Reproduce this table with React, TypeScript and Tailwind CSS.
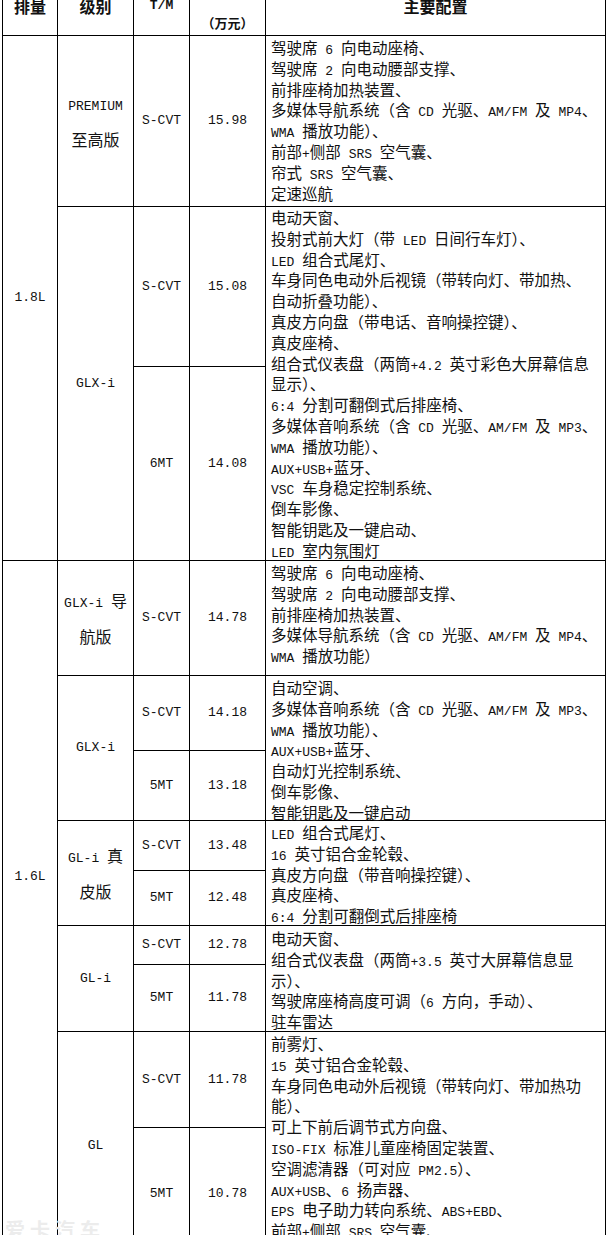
import type { ReactNode } from 'react';

// split text into CJK and ASCII runs so Latin gets the narrow mono face
function Mix({ text }: { text: string }) {
  const parts = text.split(/([\x20-\x7e]+)/);
  return (
    <>
      {parts.map((p, i) =>
        i % 2 === 1 ? (
          <span key={i} className="font-['Liberation_Mono',monospace] text-[13px]">{p}</span>
        ) : (
          p
        )
      )}
    </>
  );
}

function Cell({ className = '', children }: { className?: string; children: ReactNode }) {
  return <div className={`flex items-center justify-center bg-white text-center ${className}`}>{children}</div>;
}

function Features({ lines, className = '' }: { lines: string[]; className?: string }) {
  return (
    <div className={`col-start-5 bg-white pl-[5px] pt-[1px] text-[15.5px] ${className}`}>
      {lines.map((l, i) => (
        <div key={i} className="h-[20.8px] whitespace-nowrap leading-[20.8px]">
          <Mix text={l} />
        </div>
      ))}
    </div>
  );
}

const PREMIUM = [
  '驾驶席 6 向电动座椅、',
  '驾驶席 2 向电动腰部支撑、',
  '前排座椅加热装置、',
  '多媒体导航系统（含 CD 光驱、AM/FM 及 MP4、',
  'WMA 播放功能）、',
  '前部+侧部 SRS 空气囊、',
  '帘式 SRS 空气囊、',
  '定速巡航',
];

const GLXI_18 = [
  '电动天窗、',
  '投射式前大灯（带 LED 日间行车灯）、',
  'LED 组合式尾灯、',
  '车身同色电动外后视镜（带转向灯、带加热、',
  '自动折叠功能）、',
  '真皮方向盘（带电话、音响操控键）、',
  '真皮座椅、',
  '组合式仪表盘（两筒+4.2 英寸彩色大屏幕信息',
  '显示）、',
  '6:4 分割可翻倒式后排座椅、',
  '多媒体音响系统（含 CD 光驱、AM/FM 及 MP3、',
  'WMA 播放功能）、',
  'AUX+USB+蓝牙、',
  'VSC 车身稳定控制系统、',
  '倒车影像、',
  '智能钥匙及一键启动、',
  'LED 室内氛围灯',
];

const GLXI_NAV = [
  '驾驶席 6 向电动座椅、',
  '驾驶席 2 向电动腰部支撑、',
  '前排座椅加热装置、',
  '多媒体导航系统（含 CD 光驱、AM/FM 及 MP4、',
  'WMA 播放功能）',
];

const GLXI_16 = [
  '自动空调、',
  '多媒体音响系统（含 CD 光驱、AM/FM 及 MP3、',
  'WMA 播放功能）、',
  'AUX+USB+蓝牙、',
  '自动灯光控制系统、',
  '倒车影像、',
  '智能钥匙及一键启动',
];

const GLI_LEATHER = [
  'LED 组合式尾灯、',
  '16 英寸铝合金轮毂、',
  '真皮方向盘（带音响操控键）、',
  '真皮座椅、',
  '6:4 分割可翻倒式后排座椅',
];

const GLI = [
  '电动天窗、',
  '组合式仪表盘（两筒+3.5 英寸大屏幕信息显',
  '示）、',
  '驾驶席座椅高度可调（6 方向，手动）、',
  '驻车雷达',
];

const GL = [
  '前雾灯、',
  '15 英寸铝合金轮毂、',
  '车身同色电动外后视镜（带转向灯、带加热功',
  '能）、',
  '可上下前后调节式方向盘、',
  'ISO-FIX 标准儿童座椅固定装置、',
  '空调滤清器（可对应 PM2.5）、',
  'AUX+USB、6 扬声器、',
  'EPS 电子助力转向系统、ABS+EBD、',
  '前部+侧部 SRS 空气囊、',
  '帘式 SRS 空气囊',
];

export default function App() {
  return (
    <div className="relative h-[1235px] w-[608px] overflow-hidden bg-white font-['Noto_Sans_CJK_SC',sans-serif] text-[#111]">
      <div className="-mt-[24px] ml-[2px] grid w-[604px] grid-cols-[54px_75px_55px_75px_339px] grid-rows-[58px_170px_159px_193px_114px_74px_69px_49px_54px_38px_66px_95px_132px] gap-px bg-black p-px">
        {/* header */}
        <Cell className="col-start-1 row-start-1 text-[16px] font-bold">排量</Cell>
        <Cell className="col-start-2 row-start-1 text-[16px] font-bold">级别</Cell>
        <Cell className="col-start-3 row-start-1 font-bold">
          <Mix text="T/M" />
        </Cell>
        <div className="col-start-4 row-start-1 flex flex-col items-center justify-end bg-white font-bold">
          <div className="text-[16px] leading-[40px]">价格</div>
          <div className="text-[13px] leading-[24px]">（万元）</div>
        </div>
        <Cell className="col-start-5 row-start-1 text-[16px] font-bold">主要配置</Cell>

        {/* 1.8L */}
        <Cell className="col-start-1 row-start-2 row-span-3">
          <Mix text="1.8L" />
        </Cell>

        <Cell className="col-start-2 row-start-2 flex-col text-[16px] leading-[32px]">
          <div><Mix text="PREMIUM" /></div>
          <div>至高版</div>
        </Cell>
        <Cell className="col-start-3 row-start-2"><Mix text="S-CVT" /></Cell>
        <Cell className="col-start-4 row-start-2"><Mix text="15.98" /></Cell>
        <Features lines={PREMIUM} className="row-start-2" />

        <Cell className="col-start-2 row-start-3 row-span-2 text-[16px]"><Mix text="GLX-i" /></Cell>
        <Cell className="col-start-3 row-start-3"><Mix text="S-CVT" /></Cell>
        <Cell className="col-start-4 row-start-3"><Mix text="15.08" /></Cell>
        <Features lines={GLXI_18} className="row-start-3 row-span-2 !pt-0" />
        <Cell className="col-start-3 row-start-4"><Mix text="6MT" /></Cell>
        <Cell className="col-start-4 row-start-4"><Mix text="14.08" /></Cell>

        {/* 1.6L */}
        <div className="col-start-1 row-start-5 row-span-9 bg-white pt-[302px] text-center leading-[20px]">
          <Mix text="1.6L" />
        </div>

        <Cell className="col-start-2 row-start-5 flex-col text-[16px] leading-[33px]">
          <div><Mix text="GLX-i " />导</div>
          <div>航版</div>
        </Cell>
        <Cell className="col-start-3 row-start-5"><Mix text="S-CVT" /></Cell>
        <Cell className="col-start-4 row-start-5"><Mix text="14.78" /></Cell>
        <Features lines={GLXI_NAV} className="row-start-5" />

        <Cell className="col-start-2 row-start-6 row-span-2 text-[16px]"><Mix text="GLX-i" /></Cell>
        <Cell className="col-start-3 row-start-6"><Mix text="S-CVT" /></Cell>
        <Cell className="col-start-4 row-start-6"><Mix text="14.18" /></Cell>
        <Features lines={GLXI_16} className="row-start-6 row-span-2" />
        <Cell className="col-start-3 row-start-7"><Mix text="5MT" /></Cell>
        <Cell className="col-start-4 row-start-7"><Mix text="13.18" /></Cell>

        <Cell className="col-start-2 row-start-8 row-span-2 flex-col text-[16px] leading-[33px]">
          <div><Mix text="GL-i " />真</div>
          <div>皮版</div>
        </Cell>
        <Cell className="col-start-3 row-start-8"><Mix text="S-CVT" /></Cell>
        <Cell className="col-start-4 row-start-8"><Mix text="13.48" /></Cell>
        <Features lines={GLI_LEATHER} className="row-start-8 row-span-2" />
        <Cell className="col-start-3 row-start-9"><Mix text="5MT" /></Cell>
        <Cell className="col-start-4 row-start-9"><Mix text="12.48" /></Cell>

        <Cell className="col-start-2 row-start-10 row-span-2 text-[16px]"><Mix text="GL-i" /></Cell>
        <Cell className="col-start-3 row-start-10"><Mix text="S-CVT" /></Cell>
        <Cell className="col-start-4 row-start-10"><Mix text="12.78" /></Cell>
        <Features lines={GLI} className="row-start-10 row-span-2 !pt-[2px]" />
        <Cell className="col-start-3 row-start-11"><Mix text="5MT" /></Cell>
        <Cell className="col-start-4 row-start-11"><Mix text="11.78" /></Cell>

        <Cell className="col-start-2 row-start-12 row-span-2 text-[16px]"><Mix text="GL" /></Cell>
        <Cell className="col-start-3 row-start-12"><Mix text="S-CVT" /></Cell>
        <Cell className="col-start-4 row-start-12"><Mix text="11.78" /></Cell>
        <Features lines={GL} className="row-start-12 row-span-2" />
        <Cell className="col-start-3 row-start-13"><Mix text="5MT" /></Cell>
        <Cell className="col-start-4 row-start-13"><Mix text="10.78" /></Cell>
      </div>

      {/* faint site watermark */}
      <span className="absolute left-[5px] top-[1220px] text-[20px] font-bold leading-none tracking-[5px] text-[#ececec]">
        爱卡汽车
      </span>
    </div>
  );
}
